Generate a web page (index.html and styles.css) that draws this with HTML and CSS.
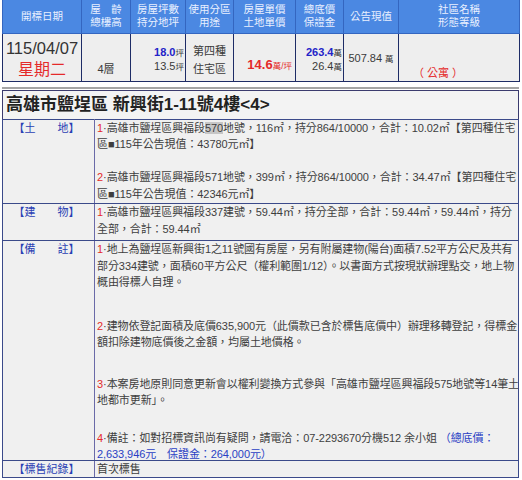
FILE: index.html
```html
<!DOCTYPE html>
<html lang="zh-Hant">
<head>
<meta charset="utf-8">
<title>標售資訊</title>
<link rel="stylesheet" href="styles.css">
</head>
<body>
<div class="page">
  <table class="summary">
    <colgroup>
      <col class="w1"><col class="w2"><col class="w3"><col class="w4"><col class="w5"><col class="w6"><col class="w7"><col class="w8">
    </colgroup>
    <thead>
      <tr>
        <th>開標日期</th>
        <th>屋　齡<br>總樓高</th>
        <th>房屋坪數<br>持分地坪</th>
        <th>使用分區<br>用途</th>
        <th>房屋單價<br>土地單價</th>
        <th>總底價<br>保證金</th>
        <th>公告現值</th>
        <th>社區名稱<br>形態等級</th>
      </tr>
    </thead>
    <tbody>
      <tr>
        <td class="date"><span class="ymd">115/04/07</span><br><span class="wk">星期二</span></td>
        <td class="floor">4層</td>
        <td class="area"><b class="blue">18.0</b><span class="unit">坪</span><br>13.5<span class="unit">坪</span></td>
        <td class="zone">第四種<br>住宅區</td>
        <td class="uprice"><b class="red big">14.6</b><span class="unit red">萬/坪</span></td>
        <td class="total"><b class="blue">263.4</b><span class="unit">萬</span><br>26.4<span class="unit">萬</span></td>
        <td class="value">507.84 <span class="unit">萬</span></td>
        <td class="kind">（ <span class="red">公寓</span> ）</td>
      </tr>
    </tbody>
  </table>

  <div class="sep"></div>

  <div class="title">高雄市鹽埕區 新興街1-11號4樓&lt;4&gt;</div>
  <table class="info">
    <tr class="land">
      <th>【土　　地】</th>
      <td>
        <p class="para"><span class="n">1</span>·高雄市鹽埕區興福段<span class="hl">570</span>地號，116㎡，持分864/10000，合計：10.02㎡【第四種住宅<br>區■115年公告現值：43780元㎡】</p>
        <p class="para gap1"><span class="n">2</span>·高雄市鹽埕區興福段571地號，399㎡，持分864/10000，合計：34.47㎡【第四種住宅<br>區■115年公告現值：42346元㎡】</p>
      </td>
    </tr>
    <tr class="build">
      <th>【建　　物】</th>
      <td>
        <p class="para"><span class="n">1</span>·高雄市鹽埕區興福段337建號，59.44㎡，持分全部，合計：59.44㎡，59.44㎡，持分<br>全部，合計：59.44㎡</p>
      </td>
    </tr>
    <tr>
      <th>【備　　註】</th>
      <td>
        <p class="para"><span class="n">1</span>·地上為鹽埕區新興街1之11號國有房屋，另有附屬建物(陽台)面積7.52平方公尺及共有<br>部分334建號，面積60平方公尺（權利範圍1/12）。以書面方式按現狀辦理點交，地上物<br>概由得標人自理。</p>
        <p class="para gap2"><span class="n">2</span>·建物依登記面積及底價635,900元（此價款已含於標售底價中）辦理移轉登記，得標金<br>額扣除建物底價後之金額，均屬土地價格。</p>
        <p class="para gap3"><span class="n">3</span>·本案房地原則同意更新會以權利變換方式參與「高雄市鹽埕區興福段575地號等14筆土<br>地都市更新」。</p>
        <p class="para gap4"><span class="n">4</span>·備註：如對招標資訊尚有疑問，請電洽：07-2293670分機512 余小姐 <span class="bl">（總底價：<br>2,633,946元　保證金：264,000元）</span></p>
      </td>
    </tr>
    <tr>
      <th>【標售紀錄】</th>
      <td><p class="para">首次標售</p></td>
    </tr>
  </table>
</div>
</body>
</html>
```

FILE: styles.css
```css
html, body {
  margin: 0;
  padding: 0;
  background: #ffffff;
}
body {
  font-family: "Liberation Sans", "Noto Sans CJK TC", sans-serif;
  color: #3a3a3a;
}
.page {
  padding: 0 3px 0 2px;
  width: 517px;
}

/* ---------- summary table ---------- */
.summary {
  width: 517px;
  border-collapse: collapse;
  table-layout: fixed;
}
.w1 { width: 79px; }
.w2 { width: 49px; }
.w3 { width: 55px; }
.w4 { width: 48px; }
.w5 { width: 62px; }
.w6 { width: 48px; }
.w7 { width: 55px; }
.w8 { width: 121px; }

.summary thead tr { height: 33px; }
.summary tbody tr { height: 48px; }

.summary th {
  background: #4b88e2;
  color: #e9f0ff;
  font-weight: normal;
  font-size: 10.5px;
  line-height: 13px;
  padding: 0;
  text-align: center;
  vertical-align: middle;
  border: 1px solid #3466c0;
  border-top: none;
}
.summary td {
  background: #eeeeee;
  border: 1px solid #1e2c66;
  padding: 0;
  vertical-align: top;
  font-size: 11px;
  line-height: 13px;
  color: #3a3a3a;
}
.summary .date {
  text-align: center;
  line-height: 20px;
  padding-top: 4px;
}
.ymd {
  font-size: 16.5px;
  color: #333;
}
.wk {
  font-size: 16px;
  color: #e52a2a;
}
.summary .floor {
  text-align: center;
  padding-top: 29px;
}
.summary .area {
  text-align: right;
  padding-right: 1px;
  padding-top: 12px;
}
.summary .zone {
  text-align: center;
  line-height: 18px;
  padding-top: 8px;
}
.summary .uprice {
  text-align: right;
  padding-right: 3px;
  padding-top: 24px;
}
.summary .total {
  text-align: right;
  padding-right: 1px;
  padding-top: 12px;
}
.summary .value {
  text-align: center;
  padding-top: 18px;
}
.summary .kind {
  text-align: left;
  padding-left: 14px;
  padding-top: 33px;
  color: #e52a2a;
}
.blue { color: #2323c8; }
.red { color: #e52a2a; }
.big { font-size: 13px; }
.unit {
  font-size: 8.5px;
}

/* ---------- separator ---------- */
.sep {
  height: 2px;
  background: #a4a4a4;
  margin: 5px 0 1px;
}

/* ---------- detail ---------- */
.title {
  border: 1px solid #3b3b6e;
  border-bottom: none;
  background: #f3f3f3;
  height: 28px;
  line-height: 28px;
  padding-left: 3px;
  font-size: 17px;
  font-weight: bold;
  color: #222;
}
.info {
  width: 517px;
  border-collapse: collapse;
  table-layout: fixed;
  background: #f0f0f0;
}
.info th,
.info td {
  border: 1px solid #3b4a8a;
  vertical-align: top;
  font-size: 11px;
  line-height: 16.5px;
}
.info th {
  width: 87px;
  font-weight: normal;
  color: #2a3fb4;
  text-align: center;
  padding: 0 4px 0 0;
  border-right: 1px solid #6a6aa8;
}
.info td {
  padding: 0 0 0 2px;
  color: #3e3e3e;
  letter-spacing: -0.08px;
}
.info .land th,
.info .land td {
  padding-bottom: 1px;
}
.info .build th,
.info .build td {
  padding-bottom: 3px;
}
.para {
  margin: 0 -4px 0 0;
  white-space: nowrap;
}
.gap1 { margin-top: 16.5px; }
.gap2 { margin-top: 27px; }
.gap3 { margin-top: 25px; }
.gap4 { margin-top: 21px; margin-bottom: -3px; }
.n { color: #e52a2a; }
.hl { background: #c6c6c6; }
.bl { color: #2a3fc4; }
```
